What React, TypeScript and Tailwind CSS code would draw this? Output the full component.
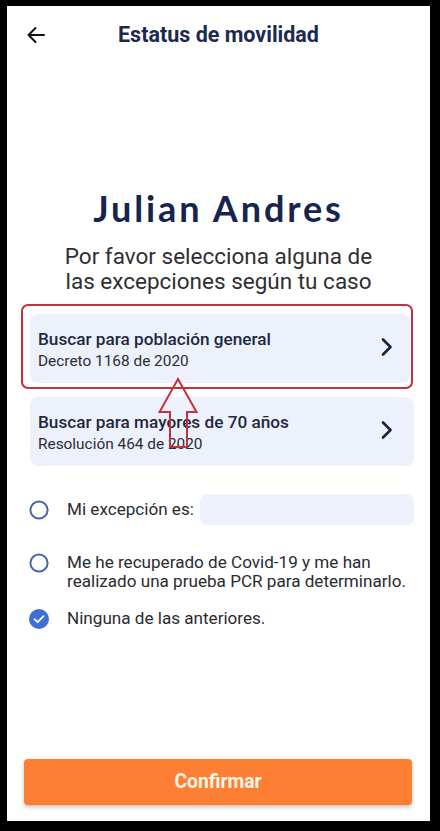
import React from 'react';

const Chevron = () => (
  <svg width="14" height="20" viewBox="0 0 14 20" fill="none">
    <path d="M3 2.5 L10.5 10 L3 17.5" stroke="#1b2338" strokeWidth="2.6" strokeLinecap="round" strokeLinejoin="round" />
  </svg>
);

const Radio = ({ checked }: { checked?: boolean }) =>
  checked ? (
    <svg width="20" height="20" viewBox="0 0 20 20">
      <circle cx="10" cy="10" r="10" fill="#3f6ed6" />
      <path d="M5.5 10.2 L8.6 13.2 L14.5 7.2" stroke="#fff" strokeWidth="1.8" fill="none" strokeLinecap="round" strokeLinejoin="round" />
    </svg>
  ) : (
    <svg width="20" height="20" viewBox="0 0 20 20">
      <circle cx="10" cy="10" r="8.6" fill="none" stroke="#4a67ad" strokeWidth="2" />
    </svg>
  );

export default function App() {
  return (
    <div className="w-[440px] h-[831px] bg-black pt-[6px] pl-[7px] pr-[10px] pb-[10px]" style={{ fontFamily: 'Roboto, "Noto Sans", sans-serif' }}>
      <div className="w-full h-full bg-white flex flex-col">
        {/* header */}
        <div className="relative h-[58px] flex items-center justify-center shrink-0">
          <svg className="absolute left-[19px] top-[20px]" width="20" height="18" viewBox="0 0 20 18" fill="none">
            <path d="M18 9 H2.5 M9.5 2 L2.5 9 L9.5 16" stroke="#111" strokeWidth="2" strokeLinecap="round" strokeLinejoin="round" />
          </svg>
          <h1 className="text-[21.5px] font-bold text-[#1c2a4f] leading-none">Estatus de movilidad</h1>
        </div>

        <div className="mt-[124px] h-[40px] flex items-center justify-center text-[36px] font-bold text-[#15254f] tracking-[0.08em]" style={{ fontFamily: 'Lato, sans-serif' }}>
          Julian Andres
        </div>

        <p className="mt-[16px] text-center text-[22.5px] leading-[25px] text-[#2f2f33]">
          Por favor selecciona alguna de
          <br />
          las excepciones según tu caso
        </p>

        {/* cards */}
        <div className="mt-[20px] pl-[23px] pr-[16px] flex flex-col gap-[14px]">
          <div className="relative mr-[4px]">
            <div className="h-[69px] bg-[#edf1fb] rounded-[8px] pl-[8px] pr-[16px] pt-[15px] flex justify-between">
              <div>
                <div className="text-[17.2px] leading-[21px] font-medium text-[#1e2840]">Buscar para población general</div>
                <div className="mt-[1px] text-[15.4px] leading-[21px] text-[#2a2d36]">Decreto 1168 de 2020</div>
              </div>
              <div className="pt-[8px]"><Chevron /></div>
            </div>
            {/* annotation box */}
            <div className="absolute left-[-9px] right-[-3px] top-[-10px] bottom-[-6px] border-2 border-[#c4303c] rounded-[7px] pointer-events-none" />
          </div>

          <div className="h-[69px] bg-[#edf1fb] rounded-[8px] pl-[8px] pr-[20px] pt-[15px] flex justify-between">
            <div>
              <div className="text-[17.2px] leading-[21px] font-medium text-[#1e2840]">Buscar para mayores de 70 años</div>
              <div className="mt-[1px] text-[15.4px] leading-[21px] text-[#2a2d36]">Resolución 464 de 2020</div>
            </div>
            <div className="pt-[8px]"><Chevron /></div>
          </div>
        </div>

        {/* options */}
        <div className="mt-[28px] pl-[22px] pr-[16px] flex flex-col">
          <div className="h-[31px] flex items-center">
            <Radio />
            <span className="ml-[18px] text-[17.1px] text-[#2b2b30]">Mi excepción es:</span>
            <div className="ml-[6px] flex-1 h-[31px] bg-[#eef2fc] rounded-[7px]" />
          </div>
          <div className="mt-[28px] flex items-start">
            <Radio />
            <span className="ml-[18px] text-[17.1px] leading-[19px] text-[#2b2b30]">
              Me he recuperado de Covid-19 y me han
              <br />
              realizado una prueba PCR para determinarlo.
            </span>
          </div>
          <div className="mt-[18px] h-[19px] flex items-center">
            <Radio checked />
            <span className="ml-[18px] text-[17.1px] text-[#2b2b30]">Ninguna de las anteriores.</span>
          </div>
        </div>

        <div className="flex-1" />

        <div className="pl-[17px] pr-[18px] pb-[16px]">
          <button className="w-full h-[46px] bg-[#fd7f34] rounded-[4px] shadow-[0_2px_4px_rgba(0,0,0,0.25)] text-[19.3px] font-bold text-[#fff5e6]">
            Confirmar
          </button>
        </div>
      </div>

      {/* annotation arrow */}
      <svg className="absolute left-[158px] top-[377px]" width="41" height="72" viewBox="0 0 41 72" fill="none">
        <path d="M20 2 L38.5 35 L29 35 L29 70 L12 70 L12 35 L1.5 35 Z" stroke="#c4303c" strokeWidth="2" strokeLinejoin="miter" />
      </svg>
    </div>
  );
}
